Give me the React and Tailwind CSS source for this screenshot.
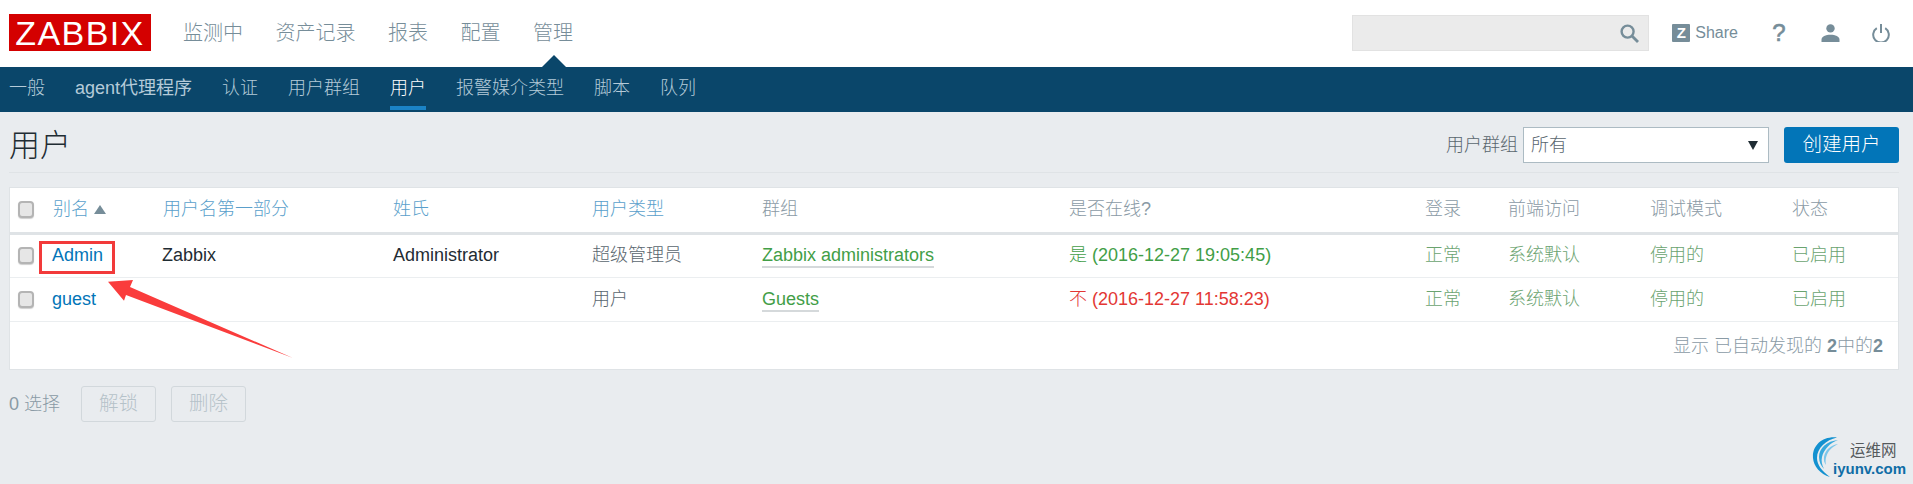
import React from "react";

const FONT = "font-['Liberation_Sans','Noto_Sans_CJK_SC',sans-serif]";

const topNav = ["监测中", "资产记录", "报表", "配置", "管理"];
const subNav = ["一般", "agent代理程序", "认证", "用户群组", "用户", "报警媒介类型", "脚本", "队列"];
const heads = ["用户名第一部分", "姓氏", "用户类型", "群组", "是否在线?", "登录", "前端访问", "调试模式", "状态"];
const linkHead = [true, true, true, false, false, false, false, false, false];

function Check() {
  return <span className="block w-[16px] h-[17px] rounded-[4px] border-2 border-[#b4b4b4] bg-[#e6e6e6] shadow-[0_1px_1px_#cfcfcf]" />;
}

function Row({ alias, first, last, type, group, online, time, onlineClass }) {
  const green = "text-[#6aa36f]";
  return (
    <tr className="h-[44px] border-b border-[#ebeef0] text-[#1f2c33]">
      <td className="pl-[8px]"><Check /></td>
      <td className="text-[#0275b8]"><span className="-ml-px">{alias}</span></td>
      <td><span className="-ml-px">{first}</span></td>
      <td>{last}</td>
      <td className="text-[#59666e]">{type}</td>
      <td><span className="text-[#429e47] border-b-2 border-[#d5d9db] pb-px">{group}</span></td>
      <td className={onlineClass}>{online} ({time})</td>
      <td className={green}>正常</td>
      <td className={green}>系统默认</td>
      <td className={green}>停用的</td>
      <td className={green}>已启用</td>
    </tr>
  );
}

export default function App() {
  return (
    <div className={`${FONT} relative h-[484px] overflow-hidden bg-[#e9ecef] font-light`}>
      <header className="h-[67px] bg-white flex items-start relative">
        <div className="ml-[9px] mt-[14px] w-[142px] h-[37px] bg-[#d40000] text-white flex items-center justify-center font-normal text-[34px] leading-none tracking-[1.4px]">ZABBIX</div>
        <nav className="ml-[32px] mt-[19px] flex gap-[32.5px] text-[20px] leading-[28px] text-[#768d99]">
          {topNav.map((t) => <span key={t}>{t}</span>)}
        </nav>
        <span className="absolute left-[542px] top-[55px] w-0 h-0 border-x-[12px] border-x-transparent border-b-[12px] border-b-[#0a466a]" />
        <div className="ml-auto mt-[15px] flex items-center h-[36px] text-[#768d99]">
          <div className="w-[297px] h-[36px] bg-[#ebebeb] border border-[#e2e2e2] flex items-center justify-end pr-[9px]">
            <svg viewBox="0 0 19 19" className="w-[19px] h-[19px]" fill="none" stroke="#768d99" strokeWidth="2.4">
              <circle cx="7.6" cy="7.6" r="6" />
              <path d="M12 12l6 6" strokeWidth="2.8" />
            </svg>
          </div>
          <div className="ml-[23px] w-[18px] h-[18px] bg-[#768d99] rounded-[1px] text-white text-[15px] font-bold leading-[18px] text-center">Z</div>
          <span className="ml-[5px] text-[16px] font-normal">Share</span>
          <span className="ml-[34px] text-[24px] font-normal [-webkit-text-stroke:0.6px_#768d99] leading-none w-[14px] text-center">?</span>
          <svg viewBox="0 0 18 18" className="ml-[35px] w-[19px] h-[18px] fill-[#768d99]">
            <circle cx="9" cy="4.4" r="4.2" />
            <path d="M0 18v-2.2C0 12.6 4.2 10.8 9 10.8s9 1.8 9 5V18z" />
          </svg>
          <svg viewBox="0 0 18 18" className="ml-[32px] mr-[23px] w-[18px] h-[18px]" fill="none" stroke="#768d99" strokeWidth="2">
            <path d="M4.8 4.2a7.8 7.8 0 1 0 8.4 0" />
            <path d="M9 0v9" />
          </svg>
        </div>
      </header>

      <nav className="h-[45px] bg-[#0a466a] pl-[9px] flex gap-[30px] text-[18px] leading-[43px] text-[#b5cbd9]">
        {subNav.map((t) => (
          <span key={t} className={`h-[43px] ${t === "用户" ? "text-white border-b-4 border-[#1b83c6]" : ""} ${t.startsWith("agent") ? "font-normal" : ""}`}>{t}</span>
        ))}
      </nav>

      <main className="px-[9px] pr-[14px]">
        <div className="h-[61px] pt-[6px] border-b border-[#dfe3e6] flex items-center justify-between">
          <h1 className="text-[31px] leading-none text-[#1f2c33] font-light">用户</h1>
          <div className="flex items-center text-[18px]">
            <span className="text-[#59666e]">用户群组</span>
            <div className="ml-[5px] w-[246px] h-[36px] bg-white border border-[#acbbc3] pl-[7px] pr-[10px] flex items-center justify-between text-[#59666e]">
              <span>所有</span>
              <span className="w-0 h-0 border-x-[5px] border-x-transparent border-t-[9px] border-t-[#1f2c33]" />
            </div>
            <button className="ml-[15px] w-[115px] h-[36px] bg-[#0275b8] rounded-[3px] text-white text-[19.5px] font-light">创建用户</button>
          </div>
        </div>

        <section className="mt-[14px] bg-white border border-[#dfe3e6] h-[183px]">
          <table className="table-fixed w-full text-[18px] border-collapse">
            <colgroup>
              <col className="w-[43px]" />
              <col className="w-[110px]" />
              <col className="w-[230px]" />
              <col className="w-[199px]" />
              <col className="w-[170px]" />
              <col className="w-[307px]" />
              <col className="w-[356px]" />
              <col className="w-[83px]" />
              <col className="w-[142px]" />
              <col className="w-[142px]" />
              <col />
            </colgroup>
            <thead>
              <tr className="h-[45px] border-b-[3px] border-[#dfe3e6] text-left">
                <th className="pl-[8px] font-light"><Check /></th>
                <th className="font-light text-[#5a9fcb]">
                  <span className="inline-flex items-center gap-[5px]">别名
                    <span className="w-0 h-0 border-x-[6px] border-x-transparent border-b-[9px] border-b-[#768d99]" />
                  </span>
                </th>
                {heads.map((h, i) => (
                  <th key={h} className={`font-light ${linkHead[i] ? "text-[#5a9fcb]" : "text-[#8a9aa5]"}`}>{h}</th>
                ))}
              </tr>
            </thead>
            <tbody>
              <Row alias="Admin" first="Zabbix" last="Administrator" type="超级管理员" group="Zabbix administrators" online="是" time="2016-12-27 19:05:45" onlineClass="text-[#429e47]" />
              <Row alias="guest" first="" last="" type="用户" group="Guests" online="不" time="2016-12-27 11:58:23" onlineClass="text-[#e33734]" />
            </tbody>
          </table>
          <p className="text-right pr-[15px] pt-[10px] text-[18px] leading-[28px] text-[#8a9aa5]">显示 已自动发现的 <b className="font-bold text-[#768d99]">2</b>中的<b className="font-bold text-[#768d99]">2</b></p>
        </section>

        <div className="mt-[16px] flex items-center text-[18px] text-[#8a9aa5]">
          <span className="w-[72px]">0 选择</span>
          <button className="w-[75px] h-[36px] border border-[#d2d8dc] rounded-[3px] text-[#b5c2c9] text-[19.5px]">解锁</button>
          <button className="ml-[15px] w-[75px] h-[36px] border border-[#d2d8dc] rounded-[3px] text-[#b5c2c9] text-[19.5px]">删除</button>
        </div>
      </main>

      {/* annotation drawn over the screenshot */}
      <div className="absolute left-[39px] top-[241px] w-[76px] h-[33px] border-[3px] border-[#f23a3a]" />
      <svg className="absolute left-0 top-0 w-[320px] h-[380px] pointer-events-none" viewBox="0 0 320 380">
        <polygon points="108,281.7 133,280 130,287 293,358 126,295 124,300.7" fill="#fa3c3c" />
      </svg>

      {/* watermark */}
      <div className="absolute left-[1810px] top-[437px] w-[100px] h-[42px]">
        <svg className="absolute left-0 top-0 w-[34px] h-[41px]" viewBox="0 0 34 41" fill="none">
          <path d="M27 0.5C12 -1 2 9 3 21c.6 8 7 16 17 19C12 34 7 28 7 21 7 11 16 3 27 0.5z" fill="#1391d0" />
          <path d="M28 3C17 4 9 11 9 20c0 5 2 9 5 12-2-4-3-8-2-12C14 12 20 6 28 3z" fill="#37a9dd" />
          <path d="M28 7C21 8 15 13 14 20c-.4 3 .3 6 2 8-.6-3-.6-6 .5-9C18 14 22 10 28 7z" fill="#7cc6ea" />
        </svg>
        <span className="absolute left-[40px] top-[5px] text-[15.5px] leading-[18px] text-[#55595c] font-normal whitespace-nowrap">运维网</span>
        <span className="absolute left-[23px] top-[23px] text-[15px] leading-[18px] font-bold text-[#0f6da6] whitespace-nowrap">iyunv.com</span>
      </div>
    </div>
  );
}
